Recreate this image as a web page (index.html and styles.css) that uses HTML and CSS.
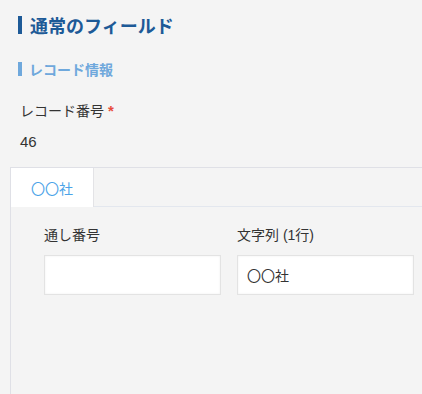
FILE: index.html
```html
<!DOCTYPE html>
<html lang="ja">
  <head>
    <meta charset="UTF-8" />
    <meta name="viewport" content="width=device-width, initial-scale=1.0" />
    <title>通常のフィールド</title>
    <link rel="stylesheet" href="styles.css">
  </head>
  <body>
    <div class="page">
      <h2 class="title">通常のフィールド</h2>
      <h4 class="section-title">レコード情報</h4>

      <div class="record-field">
        <div class="record-label">レコード番号<span class="required">*</span></div>
        <div class="record-value">46</div>
      </div>

      <div class="tabs">
        <div class="tab-bar">
          <div class="tab active">〇〇社</div>
        </div>
        <div class="tab-panel">
          <div class="field-row">
            <div class="field">
              <div class="field-label">通し番号</div>
              <div class="field-input"></div>
            </div>
            <div class="field">
              <div class="field-label">文字列 (1行)</div>
              <div class="field-input">〇〇社</div>
            </div>
          </div>
        </div>
      </div>
    </div>
  </body>
</html>
```

FILE: styles.css
```css
* {
  margin: 0;
  padding: 0;
  box-sizing: border-box;
}
body {
  font-family: "Liberation Sans", "Noto Sans CJK JP", sans-serif;
  background-color: #f4f4f4;
  color: #333;
  overflow: hidden;
}
.page {
  padding-top: 16px;
}
.title,
.section-title {
  font-family: "Noto Sans CJK JP", sans-serif;
  font-weight: bold;
}
.title {
  margin-left: 18px;
  padding-left: 8px;
  border-left: 4px solid #1d5a97;
  font-size: 18px;
  line-height: 18px;
  color: #1d5a97;
}
.section-title {
  margin: 28px 0 0 18px;
  padding-left: 7px;
  border-left: 4px solid #6fa8dc;
  font-size: 14px;
  line-height: 14px;
  color: #6fa8dc;
}
.record-field {
  margin: 26px 0 0 20px;
}
.record-label {
  font-size: 14px;
  line-height: 17px;
}
.required {
  margin-left: 4px;
  color: #e74c3c;
  font-weight: bold;
  font-size: 15px;
}
.record-value {
  margin-top: 12px;
  font-size: 15px;
  line-height: 20px;
}
.tabs {
  margin: 15px 0 0 10px;
  height: 240px;
  border-top: 1px solid #dfe0e6;
  border-left: 1px solid #dfe0e6;
}
.tab-bar {
  display: flex;
  border-bottom: 1px solid #e3e7ee;
}
.tab {
  width: 83px;
  height: 39px;
  margin-bottom: -1px;
  display: flex;
  align-items: center;
  justify-content: center;
  font-size: 14px;
  color: #4ba3e8;
  border-right: 1px solid #e3e3e6;
}
.tab.active {
  background: #fff;
}
.tab-panel {
  padding: 20px 0 0 33px;
}
.field-row {
  display: flex;
  gap: 16px;
}
.field {
  width: 177px;
}
.field-label {
  font-size: 14px;
  line-height: 17px;
  margin-bottom: 11px;
}
.field-input {
  height: 40px;
  padding-left: 9px;
  display: flex;
  align-items: center;
  font-size: 14px;
  background: #fff;
  border: 1px solid #e3e3e3;
  box-shadow: inset 0 0 2px rgba(0, 0, 0, 0.08);
}
```
